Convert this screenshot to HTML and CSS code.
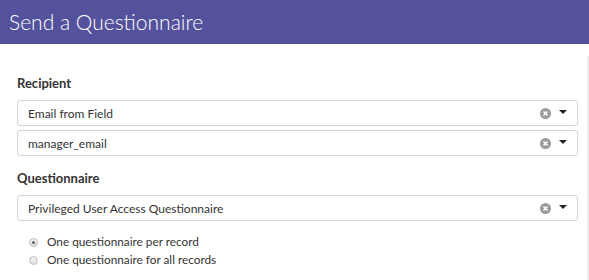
FILE: index.html
```html
<!DOCTYPE html>
<html>
<head>
<meta charset="utf-8">
<link rel="stylesheet" href="styles.css">
</head>
<body>
<header class="header"><h1 class="title">Send a Questionnaire</h1></header>
<div class="main">
  <div class="content">
    <div class="label">Recipient</div>
    <div class="select">
      <span class="value">Email from Field</span>
      <span class="clear"><svg width="11" height="11" viewBox="0 0 10 10"><circle cx="5" cy="5" r="5" fill="#9b9b9b"/><path d="M3.2 3.2L6.8 6.8M6.8 3.2L3.2 6.8" stroke="#fff" stroke-width="1.4"/></svg></span>
      <span class="arrow"></span>
    </div>
    <div class="select">
      <span class="value">manager_email</span>
      <span class="clear"><svg width="11" height="11" viewBox="0 0 10 10"><circle cx="5" cy="5" r="5" fill="#9b9b9b"/><path d="M3.2 3.2L6.8 6.8M6.8 3.2L3.2 6.8" stroke="#fff" stroke-width="1.4"/></svg></span>
      <span class="arrow"></span>
    </div>
    <div class="label label-q">Questionnaire</div>
    <div class="select">
      <span class="value">Privileged User Access Questionnaire</span>
      <span class="clear"><svg width="11" height="11" viewBox="0 0 10 10"><circle cx="5" cy="5" r="5" fill="#9b9b9b"/><path d="M3.2 3.2L6.8 6.8M6.8 3.2L3.2 6.8" stroke="#fff" stroke-width="1.4"/></svg></span>
      <span class="arrow"></span>
    </div>
    <div class="radios">
      <label class="radio"><span class="dot checked"></span>One questionnaire per record</label>
      <label class="radio"><span class="dot"></span>One questionnaire for all records</label>
    </div>
  </div>
  <div class="strip"></div>
</div>
</body>
</html>
```

FILE: styles.css
```css
html, body {
  margin: 0;
  padding: 0;
  background: #fff;
  font-family: Lato, "Open Sans", sans-serif;
  color: #333;
}
.header {
  height: 44px;
  background: #54529d;
  display: flex;
  align-items: center;
  padding-left: 9px;
}
.title {
  margin: 0;
  font-weight: 300;
  font-size: 21px;
  color: #fff;
  line-height: 1;
  padding-bottom: 1px;
}
.main {
  display: flex;
}
.content {
  flex: 1;
  padding: 31px 9px 0 17px;
}
.strip {
  width: 2px;
  margin-top: 12px;
  height: 224px;
  background: #eeeeee;
}
.label {
  font-weight: 700;
  font-size: 13px;
  line-height: 16px;
  margin-bottom: 9px;
  color: #333;
}
.label-q {
  margin-top: 14px;
  margin-bottom: 9px;
}
.select {
  height: 26px;
  box-sizing: border-box;
  border: 1px solid #d4d4d4;
  border-radius: 3px;
  display: flex;
  align-items: center;
  padding: 0 10px 0 10px;
  margin-bottom: 4px;
  font-size: 12px;
}
.value {
  flex: 1;
}
.clear {
  display: flex;
  margin-right: 8px;
}
.arrow {
  width: 0;
  height: 0;
  border-left: 4px solid transparent;
  border-right: 4px solid transparent;
  border-top: 4px solid #222;
  margin-top: -2px;
}
.radios {
  margin-top: 14px;
  padding-left: 12px;
  display: flex;
  flex-direction: column;
  gap: 4px;
}
.radio {
  display: flex;
  align-items: center;
  font-size: 11.8px;
  line-height: 14px;
  color: #333;
}
.dot {
  width: 7px;
  height: 7px;
  border-radius: 50%;
  border: 1px solid #bdbdbd;
  background: linear-gradient(#f4f4f4, #dedede);
  margin-right: 9px;
  display: flex;
  align-items: center;
  justify-content: center;
}
.dot.checked::after {
  content: "";
  width: 3px;
  height: 3px;
  border-radius: 50%;
  background: #666;
}
```
